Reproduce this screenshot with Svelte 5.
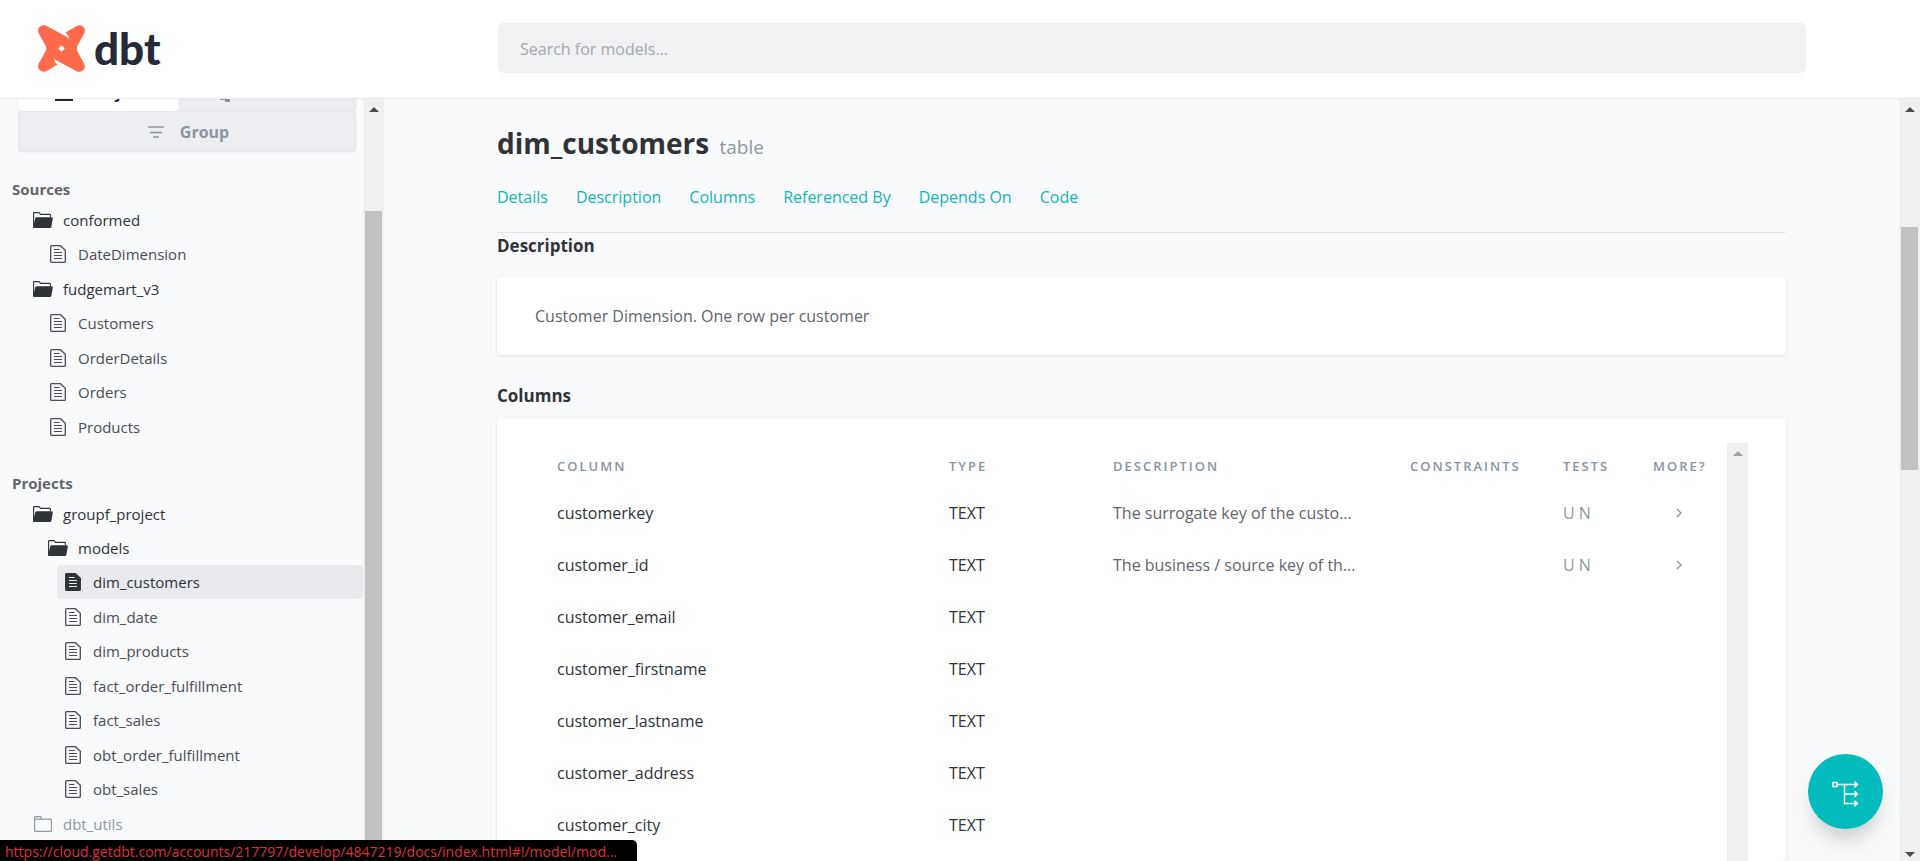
<script>
  const sources = [
    { name: 'conformed', tables: ['DateDimension'] },
    { name: 'fudgemart_v3', tables: ['Customers', 'OrderDetails', 'Orders', 'Products'] }
  ];
  const models = [
    'dim_customers',
    'dim_date',
    'dim_products',
    'fact_order_fulfillment',
    'fact_sales',
    'obt_order_fulfillment',
    'obt_sales'
  ];
  const active = 'dim_customers';
  const sections = ['Details', 'Description', 'Columns', 'Referenced By', 'Depends On', 'Code'];
  const columns = [
    { name: 'customerkey', type: 'TEXT', description: 'The surrogate key of the custo...', tests: 'U N' },
    { name: 'customer_id', type: 'TEXT', description: 'The business / source key of th...', tests: 'U N' },
    { name: 'customer_email', type: 'TEXT' },
    { name: 'customer_firstname', type: 'TEXT' },
    { name: 'customer_lastname', type: 'TEXT' },
    { name: 'customer_address', type: 'TEXT' },
    { name: 'customer_city', type: 'TEXT' }
  ];
  let query = $state('');
</script>

{#snippet folderOpen()}
  <span class="slot">
    <svg width="20" height="16" viewBox="0 0 20 16" aria-hidden="true">
      <path d="M0.6 15V1.2Q0.6 0.6 1.2 0.6H6L7.6 2.4H16.6Q17.4 2.4 17.4 3.2V5" fill="none" stroke="currentColor" stroke-width="1.1" />
      <path d="M3.8 5.2H18.6Q20 5.2 19.8 6.4L18.4 14.8Q18.2 16 17 16H0.8Q0 16 0.2 14.8L2.2 6.4Q2.5 5.2 3.8 5.2Z" fill="currentColor" />
    </svg>
  </span>
{/snippet}

{#snippet folderClosed()}
  <span class="slot">
    <svg width="18" height="16" viewBox="0 0 18 16" aria-hidden="true">
      <path d="M0.6 14.6V1.6Q0.6 0.6 1.6 0.6H6Q6.8 0.6 7 1.4L7.4 3.2H16.4Q17.4 3.2 17.4 4.2V14.4Q17.4 15.4 16.4 15.4H1.6Q0.6 15.4 0.6 14.6ZM0.8 3.2H7.4" fill="none" stroke="currentColor" stroke-width="1.2" />
    </svg>
  </span>
{/snippet}

{#snippet doc(solid)}
  <span class="slot">
    <svg width="16" height="18" viewBox="0 0 16 18" aria-hidden="true">
      <path d="M1.6 0.7H10.4L15.3 5.4V16.4Q15.3 17.3 14.4 17.3H1.6Q0.7 17.3 0.7 16.4V1.6Q0.7 0.7 1.6 0.7Z" fill={solid ? 'currentColor' : 'none'} stroke="currentColor" stroke-width="1.3" />
      <path d="M4 4.5H9.5M4 7.5H12M4 10.5H12M4 13.5H12" fill="none" stroke={solid ? '#e9eaee' : 'currentColor'} stroke-width="1.1" />
    </svg>
  </span>
{/snippet}

<div class="page">
  <header>
    <a class="logo" href="#home" aria-label="dbt">
      <svg width="47" height="47" viewBox="0 0 140 140" aria-hidden="true">
        <path d="M27 4 L80 32 Q89 36 93 42 Q92 30 82 22 L114 4 C129 -6 147 11 137 26 L118 60 Q113 70 118 80 L137 114 C146 130 129 146 114 137 L60 108 Q51 104 47 98 Q48 110 58 118 L27 136 C11 146 -6 129 3 113 L22 80 Q27 70 22 60 L3 26 C-6 10 11 -6 27 4 Z" fill="#ff6a4b" />
        <path d="M70 63 L77 70 L70 77 L63 70 Z" fill="#fff" stroke="#fff" stroke-width="4" stroke-linejoin="round" />
      </svg>
      <span class="word">dbt</span>
    </a>
    <div class="search">
      <input type="text" aria-label="Search for models" placeholder="Search for models..." bind:value={query} />
    </div>
  </header>

  <div class="body">
    <aside>
      <nav class="tree" aria-label="Resources">
        <div class="switch">
          <button class="tab on">
            <svg width="18" height="18" viewBox="0 0 18 18" aria-hidden="true"><path d="M0 2H7L9 4H18V18H0Z" fill="currentColor" /></svg>
            Project
          </button>
          <button class="tab">
            <svg width="16" height="20" viewBox="0 0 16 20" aria-hidden="true"><path d="M1 2H15V12H12V16H14V20H9V18H4V12H1Z" fill="currentColor" /></svg>
            Database
          </button>
          <button class="tab wide">
            <svg width="16" height="12" viewBox="0 0 16 12" aria-hidden="true"><path d="M0 1H16M2 6.5H14M5 11H11" stroke="currentColor" stroke-width="1.3" /></svg>
            Group
          </button>
        </div>

        <h2>Sources</h2>
        <ul>
          {#each sources as source}
            <li>
              <a href="#{source.name}" class="row folder">{@render folderOpen()}{source.name}</a>
              <ul>
                {#each source.tables as table}
                  <li><a href="#{table}" class="row l2">{@render doc(false)}{table}</a></li>
                {/each}
              </ul>
            </li>
          {/each}
        </ul>

        <h2 class="next">Projects</h2>
        <ul>
          <li>
            <a href="#groupf_project" class="row folder">{@render folderOpen()}groupf_project</a>
            <ul>
              <li>
                <a href="#models" class="row folder l2">{@render folderOpen()}models</a>
                <ul>
                  {#each models as model}
                    <li>
                      <a href="#{model}" class="row l3" class:active={model === active}>{@render doc(model === active)}{model}</a>
                    </li>
                  {/each}
                </ul>
              </li>
            </ul>
          </li>
          <li><a href="#dbt_utils" class="row muted">{@render folderClosed()}dbt_utils</a></li>
        </ul>
      </nav>
      <div class="bar side" aria-hidden="true"><i class="up"></i><i class="thumb"></i></div>
    </aside>

    <main>
      <h1>{active} <small>table</small></h1>
      <nav class="links" aria-label="Sections">
        {#each sections as section}
          <a href="#{section}">{section}</a>
        {/each}
      </nav>

      <h3>Description</h3>
      <section class="card note"><p>Customer Dimension. One row per customer</p></section>

      <h3 class="second">Columns</h3>
      <section class="card grid">
        <div class="scroll">
          <table>
            <colgroup>
              <col /><col class="c-type" /><col class="c-desc" /><col class="c-cons" /><col class="c-tests" /><col class="c-more" />
            </colgroup>
            <thead>
              <tr><th>COLUMN</th><th>TYPE</th><th>DESCRIPTION</th><th>CONSTRAINTS</th><th>TESTS</th><th>MORE?</th></tr>
            </thead>
            <tbody>
              {#each columns as column}
                <tr>
                  <td>{column.name}</td>
                  <td>{column.type}</td>
                  <td class="desc">{column.description ?? ''}</td>
                  <td></td>
                  <td class="tests">{column.tests ?? ''}</td>
                  <td class="more">
                    {#if column.description}
                      <button aria-label="Show more about {column.name}">
                        <svg width="6" height="10" viewBox="0 0 6 10" aria-hidden="true"><path d="M1 1L5 5L1 9" fill="none" stroke="currentColor" stroke-width="1.4" /></svg>
                      </button>
                    {/if}
                  </td>
                </tr>
              {/each}
            </tbody>
          </table>
        </div>
        <div class="bar inner" aria-hidden="true"><i class="up"></i></div>
      </section>
    </main>
    <div class="bar outer" aria-hidden="true"><i class="up"></i><i class="thumb"></i><i class="down"></i></div>
  </div>

  <button class="fab" aria-label="View lineage graph">
    <svg width="28" height="28" viewBox="0 0 28 28" aria-hidden="true">
      <path d="M6 6.5H23M12.5 6.5V25.5H23M12.5 16H23" fill="none" stroke="#fff" stroke-width="1.5" />
      <rect x="1" y="4.5" width="4" height="4" fill="none" stroke="#fff" stroke-width="1.6" />
      <path d="M22.5 2.8L26.6 6.5L22.5 10.2ZM22.5 12.3L26.6 16L22.5 19.7ZM22.5 21.8L26.6 25.5L22.5 29.2Z" fill="#fff" />
    </svg>
  </button>
  <div class="status">https://cloud.getdbt.com/accounts/217797/develop/4847219/docs/index.html#!/model/mod...</div>
</div>

<style>
  :global(body) {
    margin: 0;
  }
  .page {
    display: flex;
    flex-direction: column;
    height: 100vh;
    overflow: hidden;
    background: #f9fafc;
    color: #303338;
    font: 16px/26px 'Open Sans', 'Noto Sans', sans-serif;
  }
  .page * {
    box-sizing: border-box;
  }
  a {
    color: inherit;
    text-decoration: none;
  }
  button {
    border: 0;
    padding: 0;
    font: inherit;
    color: inherit;
    background: none;
  }
  ul {
    list-style: none;
    margin: 0;
    padding: 0;
  }

  header {
    display: flex;
    flex: none;
    align-items: center;
    height: 99px;
    padding-bottom: 2px;
    background: #fff;
    border-bottom: 1px solid #e8eaec;
  }
  .logo {
    display: flex;
    align-items: center;
    gap: 9px;
    width: 384px;
    flex: none;
    padding-left: 38px;
  }
  .word {
    font: 900 44px/48px Lato, sans-serif;
    color: #262a38;
  }
  .search {
    flex: 1;
    padding: 0 114px;
  }
  input {
    display: block;
    width: 100%;
    height: 50px;
    padding: 2px 22px 0;
    border: 0;
    border-radius: 5px;
    background: #f0f1f3;
    font: inherit;
    color: inherit;
  }
  input::placeholder {
    color: #a3a9b1;
    opacity: 1;
  }

  .body {
    display: flex;
    flex: 1;
    min-height: 0;
  }
  aside {
    display: flex;
    flex: none;
    width: 384px;
    overflow: hidden;
  }
  .tree {
    flex: 1;
    margin-top: -28px;
    font-size: 15px;
    line-height: 34px;
    color: #4a4d53;
  }
  .switch {
    display: grid;
    grid-template-columns: 161px 1fr;
    column-gap: 1px;
    margin: 0 7px 0 18px;
  }
  .tab {
    display: flex;
    align-items: center;
    justify-content: center;
    gap: 16px;
    height: 40px;
    padding: 2px 0 0 3px;
    border-radius: 4px;
    background: #edeef2;
    box-shadow: inset 0 0 4px #dfe1e6, 0 1px 2px #e2e4e8;
    color: #8d96a0;
    font-size: 16px;
    font-weight: 700;
  }
  .tab.on {
    background: #fff;
    box-shadow: 0 1px 2px #d8dade;
    color: #26292e;
  }
  .tab.wide {
    grid-column: span 2;
  }
  h2 {
    margin: 24px 0 0 12px;
    font-size: 15px;
    line-height: 28px;
    font-weight: 700;
    color: #62666b;
  }
  h2.next {
    margin-top: 25px;
  }
  li:nth-child(even) {
    margin-top: 1px;
  }
  .row {
    display: flex;
    height: 34px;
    align-items: center;
    gap: 10px;
    margin-left: 27px;
    padding-left: 6px;
    border-radius: 4px;
  }
  .row.l2 {
    margin-left: 42px;
  }
  .row.l3 {
    margin-left: 57px;
  }
  .row.folder,
  .row.active {
    color: #303338;
  }
  .row.active {
    background: #e9eaee;
  }
  .row.muted {
    color: #8f979f;
  }
  .slot {
    display: flex;
    justify-content: center;
    width: 20px;
    flex: none;
  }
  .slot svg {
    display: block;
  }

  main {
    display: flex;
    flex-direction: column;
    flex: 1;
    min-width: 0;
    overflow: hidden;
    padding: 22px 113px 0;
  }
  h1 {
    margin: 0;
    font-size: 28px;
    line-height: 44px;
    font-weight: 700;
  }
  small {
    margin-left: 3px;
    font-size: 19px;
    font-weight: 400;
    color: #8f979f;
  }
  .links {
    display: flex;
    gap: 28px;
    padding: 15px 0 22px;
    border-bottom: 1px solid #e3e5e8;
    color: #10b6b8;
  }
  h3 {
    margin: 0;
    font-size: 17px;
    line-height: 26px;
    font-weight: 700;
  }
  .card {
    background: #fff;
    border-radius: 4px;
    box-shadow: 0 1px 3px #dfe1e4;
  }
  .note {
    margin-top: 18px;
    padding: 26px 38px;
    color: #62656a;
  }
  .note p {
    margin: 0;
  }
  .second {
    margin-top: 28px;
  }
  .grid {
    display: flex;
    flex: 1 0 auto;
    margin-top: 9px;
    padding: 25px 38px 0;
  }
  .scroll {
    flex: 1;
    min-width: 0;
  }
  table {
    table-layout: fixed;
    width: 100%;
    border-collapse: collapse;
  }
  .c-type { width: 164px; }
  .c-desc { width: 297px; }
  .c-cons { width: 153px; }
  .c-tests { width: 90px; }
  .c-more { width: 96px; }
  th {
    height: 44px;
    padding: 2px 0 0 22px;
    text-align: left;
    font-size: 13px;
    line-height: 20px;
    font-weight: 600;
    letter-spacing: 2px;
    color: #8b949d;
  }
  td {
    height: 52px;
    padding: 0 0 0 22px;
    white-space: nowrap;
  }
  .desc {
    color: #62656a;
  }
  .tests,
  .more {
    color: #8f979f;
  }
  .more button {
    display: flex;
    margin-left: 23px;
  }

  .bar {
    display: flex;
    flex-direction: column;
    align-items: center;
    flex: none;
    width: 21px;
    padding: 8px 0 4px;
    background: #f0f0f0;
  }
  .up {
    border: 5px solid transparent;
    border-top: 0;
    border-bottom-color: #4c4c4c;
  }
  .down {
    margin-top: auto;
    border: 5px solid transparent;
    border-bottom: 0;
    border-top-color: #4c4c4c;
  }
  .inner .up {
    border-bottom-color: #a3a3a3;
  }
  .thumb {
    width: 17px;
    background: #c1c1c1;
  }
  .side {
    padding-bottom: 0;
  }
  .side .thumb {
    flex: 1;
    margin-top: 99px;
  }
  .outer .thumb {
    height: 243px;
    margin-top: 115px;
  }

  .fab {
    position: absolute;
    right: 37px;
    bottom: 32px;
    display: flex;
    align-items: center;
    justify-content: center;
    width: 75px;
    height: 75px;
    border-radius: 50%;
    background: #00bcbd;
    box-shadow: 0 15px 20px -5px #c9cbcc;
  }
  .fab svg {
    overflow: visible;
  }
  .status {
    position: absolute;
    left: 0;
    bottom: 0;
    padding: 2px 20px 0 5px;
    border-top-right-radius: 5px;
    background: #000;
    color: #dd3237;
    font-size: 14px;
    line-height: 19px;
    white-space: nowrap;
  }
</style>
